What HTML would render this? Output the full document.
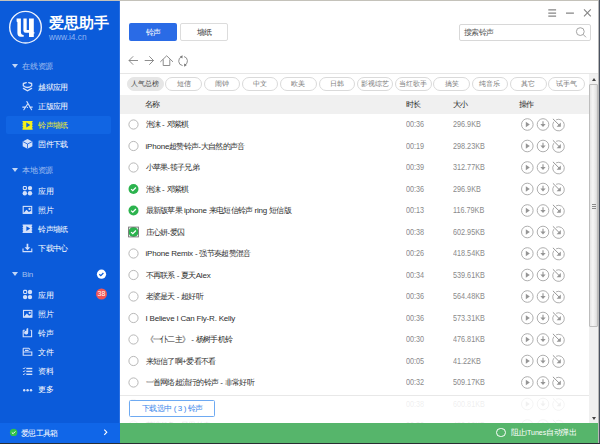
<!DOCTYPE html>
<html><head><meta charset="utf-8">
<style>
*{margin:0;padding:0;box-sizing:border-box}
html,body{width:600px;height:444px;overflow:hidden;background:#fff;font-family:"Liberation Sans",sans-serif;position:relative}
.a{position:absolute}
.t{white-space:nowrap;line-height:10px}
.sec{left:12px;font-size:8px;letter-spacing:-0.2px;color:rgba(255,255,255,.62)}
.sec i{display:inline-block;width:0;height:0;border-left:3px solid transparent;border-right:3px solid transparent;border-top:4px solid rgba(255,255,255,.75);margin-right:4px;vertical-align:1px}
.it{left:38.3px;font-size:8px;letter-spacing:-0.65px;color:#fff}

.nm{left:145.5px;font-size:8px;color:#2e2e2e}
.c{font-size:8px;letter-spacing:-0.72px}
.l{font-size:8px;letter-spacing:-0.2px}
.gr{font-size:8.2px;letter-spacing:0;color:#8a8a8a;transform:scaleX(0.885);transform-origin:0 50%}
.chip{top:77px;width:36.5px;height:14px;border:1px solid #dadada;border-radius:7px;font-size:6.6px;line-height:12px;text-align:center;color:#7a7a7a;background:#fff}
.chip.on{background:#e6e6e6;border-color:#e6e6e6;color:#444}
.hd{top:100.4px;font-size:8px;letter-spacing:-0.72px;color:#2a2a2a}
</style></head><body>
<div class="a" style="left:0;top:0;width:600px;height:1px;background:#c4c2ba"></div>
<div class="a" style="left:598px;top:0;width:1px;height:444px;background:#b8b8b8"></div>
<div class="a" style="left:599px;top:0;width:1px;height:444px;background:#4a5260"></div>
<div class="a" style="left:0;top:442.5px;width:600px;height:1.5px;background:#2a2e33"></div>

<div class="a" style="left:0;top:1px;width:120px;height:441.5px;background:#0b5bda"></div>
<div class="a" style="left:119px;top:1px;width:1px;height:422px;background:#2a6fe2"></div>
<div class="a" style="left:6px;top:116px;width:105px;height:18px;background:#1165e3;border-radius:2px"></div>
<div class="a" style="left:0;top:423px;width:120px;height:19.5px;background:#1066e8"></div>
<svg class="a" style="left:0;top:0" width="120" height="444" viewBox="0 0 120 444">
  <circle cx="25.5" cy="27.2" r="15.8" fill="#1461e0" stroke="#eef3fd" stroke-width="1.4"/>
  <path d="M16.6 18.6H20.9V32Q20.9 35 23.7 35.1V36.7H20.6Q17.4 36.7 17.4 33V22.3L16.6 21.6Z" fill="#fff"/>
  <path d="M23.4 18.6H26.7V29.9H29V18.6H33.8V32.3L35.1 32.9L33.8 33.6V37H29V32.8H25.6Q23.4 32.8 23.4 30.6Z" fill="#fff"/>
  <g fill="none" stroke="#d3e0fa" stroke-width="1.3" stroke-linecap="round">
    <path d="M23.4 83.5L26.3 82.7M28.7 82.7L31.6 83.5"/>
    <path d="M23.3 84.2V85.8Q27.5 89.2 31.7 85.8V84.2"/>
    <path d="M23.4 88.4L27.5 90.8L31.6 88.4"/>
  </g>
  <g fill="none" stroke="#d3e0fa" stroke-width="1">
    <path d="M26.9 101.6L31.6 109.7M27.4 104.4L23.8 109.7M22.7 107.1H25.3M29.7 107.1H32.3" stroke-width="1.1" stroke-linecap="round"/>
    <circle cx="27.4" cy="107.4" r="0.6" fill="#d3e0fa" stroke="none"/>
  </g>
  <path d="M22.5 120.9h10.1v1.3h-0.6v1.1h0.6v1.4h-0.6v1.1h0.6v1.4h-0.6v1.1h0.6v1.5H22.5v-1.5h0.6v-1.1h-0.6v-1.4h0.6v-1.1h-0.6v-1.4h0.6v-1.1h-0.6z" fill="#f4f01c"/>
  <path d="M26.3 122.6l4 2.4-4 2.4z" fill="#1165e3"/>
  <path d="M27.5 139l4.9 2.5v4.8l-4.9 2.5-4.8-2.5v-4.8z" fill="#d3e0fa"/>
  <path d="M22.9 141.6l4.6 2.4 4.7-2.4M27.5 144v4.6" fill="none" stroke="#0b5bda" stroke-width="0.8"/>
  <g fill="#d3e0fa">
    <circle cx="30" cy="188.1" r="2.2"/><circle cx="24.8" cy="193.2" r="2.2"/><circle cx="30" cy="193.2" r="2.2"/>
    <circle cx="30" cy="292" r="2.2"/><circle cx="25.1" cy="297.1" r="2.2"/><circle cx="30" cy="297.1" r="2.2"/>
    <circle cx="24.2" cy="390.2" r="1.2"/><circle cx="27.6" cy="390.2" r="1.2"/><circle cx="31" cy="390.2" r="1.2"/>
  </g>
  <g fill="none" stroke="#d3e0fa" stroke-width="1.1">
    <rect x="23.3" y="186.5" width="3.1" height="3.1" rx="0.8"/>
    <rect x="23.6" y="290.4" width="3.1" height="3.1" rx="0.8"/>
    <rect x="23.2" y="206.4" width="8.5" height="7" />
    <rect x="23.5" y="310.4" width="8.4" height="6.8" />
    <path d="M23.2 330.3v6.4h8.4v-6.4M24.8 330.3h-1.6M31.6 330.3h-1.2"/>
    <path d="M23.2 348.2h5.5l1.5 1.5v0M23.2 348.2v7h8.6v-3.2h-8.6M25 350.4h3.6"/>
    <path d="M23 248.6v3h8.8v-3"/>
  </g>
  <g fill="#d3e0fa">
    <path d="M23.2 213.4l3.3-3.6 2.3 2.2 2.9-1.4v2.8z"/><circle cx="29.5" cy="208.9" r="1.1"/>
    <path d="M23.5 317.2l3.3-3.6 2.3 2.2 2.8-1.4v2.8z"/><circle cx="29.7" cy="312.9" r="1.1"/>
    <path d="M26.6 243.8h1.7v3.5h2l-2.85 3-2.85-3h2z"/>
    <path d="M22.6 224.6h9.6v1.2h-0.5v1.1h0.5v1.3h-0.5v1.1h0.5v1.3h-0.5v1.1h0.5v1.3H22.6v-1.3h0.5v-1.1h-0.5v-1.3h0.5v-1.1h-0.5v-1.3h0.5v-1.1h-0.5z"/>
    <path d="M27.6 328.2v4.5a1.6 1.4 0 1 1-1.2-1.3v-2.4q0.9 0.2 1.6 1.4z" />
    <path d="M28.2 328v4.5a2 1.8 0 1 1-1.4-1.6v-2.9q1.3 0.4 1.4 0" />
  </g>
  <path d="M26.4 226.3l3.8 2.3-3.8 2.3z" fill="#0b5bda"/>
  <g fill="none" stroke="#d3e0fa" stroke-width="1">
    <path d="M23 368.2l0.8 0.8 1.4-1.6M23 371.1l0.8 0.8 1.4-1.6M23 374l0.8 0.8 1.4-1.6"/>
  </g>
  <g fill="#d3e0fa">
    <rect x="26.3" y="367.8" width="6" height="1.4"/><rect x="26.3" y="370.7" width="6" height="1.4"/><rect x="26.3" y="373.6" width="6" height="1.4"/>
  </g>
  <circle cx="101.5" cy="274.2" r="4.6" fill="#fff"/>
  <path d="M99.3 274.3l1.5 1.4 2.6-2.7" fill="none" stroke="#0b5bda" stroke-width="1.2"/>
  <circle cx="101.5" cy="294" r="5.5" fill="#f25555"/>
  <path d="M104.3 429.6l2.5 2.6-2.5 2.6" fill="none" stroke="#fff" stroke-width="1.1"/>
  <circle cx="13.6" cy="432.4" r="3.7" fill="#31c24a"/>
  <path d="M11.8 432.5l1.3 1.2 2.3-2.3" fill="none" stroke="#fff" stroke-width="1"/>
</svg>
<div class="a t" style="left:49px;top:15.3px;font-size:14.5px;line-height:16px;color:#fff;font-weight:bold">爱思助手</div>
<div class="a t" style="left:49px;top:32.5px;font-size:8.4px;line-height:8px;color:#8fb4f2">www.i4.cn</div>
<div class="a sec t" style="top:62.2px"><i></i>在线资源</div>
<div class="a it t" style="top:82.7px">越狱应用</div>
<div class="a it t" style="top:101.7px">正版应用</div>
<div class="a it t" style="top:120.7px;color:#f3ee1e">铃声墙纸</div>
<div class="a it t" style="top:140.2px">固件下载</div>
<div class="a sec t" style="top:166.2px"><i></i>本地资源</div>
<div class="a it t" style="top:186.7px">应用</div>
<div class="a it t" style="top:205.7px">照片</div>
<div class="a it t" style="top:224.6px">铃声墙纸</div>
<div class="a it t" style="top:243.6px">下载中心</div>
<div class="a sec t" style="top:270.2px"><i></i>Bin</div>
<div class="a it t" style="top:290.6px">应用</div>
<div class="a t" style="left:96px;top:289.2px;width:11px;color:#fff;font-size:7px;text-align:center">38</div>
<div class="a it t" style="top:309.7px">照片</div>
<div class="a it t" style="top:328.7px">铃声</div>
<div class="a it t" style="top:347.7px">文件</div>
<div class="a it t" style="top:366.6px">资料</div>
<div class="a it t" style="top:385.2px">更多</div>
<div class="a it t" style="left:21px;top:428.5px;font-size:8px">爱思工具箱</div>


<!-- main -->
<div class="a" style="left:129px;top:23px;width:48px;height:18px;background:#2a6be6;border-radius:2px;color:#fff;font-size:8px;letter-spacing:-0.5px;line-height:19.4px;text-align:center">铃声</div>
<div class="a" style="left:180px;top:23px;width:48px;height:18px;background:#fff;border:1px solid #dcdcdc;border-radius:2px;color:#333;font-size:8px;letter-spacing:-0.5px;line-height:17.4px;text-align:center">墙纸</div>
<div class="a" style="left:459px;top:23.5px;width:132px;height:17.2px;background:#fff;border:1px solid #d8d8d8;border-radius:2px"></div>
<div class="a t" style="left:464px;top:27.8px;font-size:8px;letter-spacing:-0.6px;color:#555">搜索铃声</div>
<div class="a" style="left:120px;top:73px;width:478px;height:1px;background:#e6e6e6"></div>
<div class="a chip on" style="left:127.0px">人气总榜</div>
<div class="a chip" style="left:165.3px">短信</div>
<div class="a chip" style="left:203.6px">闹钟</div>
<div class="a chip" style="left:241.9px">中文</div>
<div class="a chip" style="left:280.2px">欧美</div>
<div class="a chip" style="left:318.5px">日韩</div>
<div class="a chip" style="left:356.8px">影视综艺</div>
<div class="a chip" style="left:395.1px">当红歌手</div>
<div class="a chip" style="left:433.4px">搞笑</div>
<div class="a chip" style="left:471.7px">纯音乐</div>
<div class="a chip" style="left:510.0px">其它</div>
<div class="a chip" style="left:548.3px">试手气</div>
<div class="a" style="left:120px;top:95px;width:469px;height:18.5px;background:#f0f0f0"></div>
<div class="a t hd" style="left:145px">名称</div>
<div class="a t hd" style="left:405.5px">时长</div>
<div class="a t hd" style="left:453px">大小</div>
<div class="a t hd" style="left:519px">操作</div>

<div class="a t nm" style="top:120.0px"><span class="c">泡沫</span><span class="l"> - </span><span class="c">邓紫棋</span></div>
<div class="a t gr" style="left:405.5px;top:120.0px">00:36</div>
<div class="a t gr" style="left:453px;top:120.0px">296.9KB</div>
<div class="a t nm" style="top:141.5px"><span class="l">iPhone</span><span class="c">超赞铃声</span><span class="l">-</span><span class="c">大自然的声音</span></div>
<div class="a t gr" style="left:405.5px;top:141.5px">00:19</div>
<div class="a t gr" style="left:453px;top:141.5px">298.23KB</div>
<div class="a t nm" style="top:163.0px"><span class="c">小苹果</span><span class="l">-</span><span class="c">筷子兄弟</span></div>
<div class="a t gr" style="left:405.5px;top:163.0px">00:39</div>
<div class="a t gr" style="left:453px;top:163.0px">312.77KB</div>
<div class="a t nm" style="top:184.5px"><span class="c">泡沫</span><span class="l"> - </span><span class="c">邓紫棋</span></div>
<div class="a t gr" style="left:405.5px;top:184.5px">00:36</div>
<div class="a t gr" style="left:453px;top:184.5px">296.9KB</div>
<div class="a t nm" style="top:206.0px"><span class="c">最新版苹果</span><span class="l"> iphone </span><span class="c">来电短信铃声</span><span class="l"> ring </span><span class="c">短信版</span></div>
<div class="a t gr" style="left:405.5px;top:206.0px">00:13</div>
<div class="a t gr" style="left:453px;top:206.0px">116.79KB</div>
<div class="a t nm" style="top:227.5px"><span class="c">庄心妍</span><span class="l">-</span><span class="c">爱囚</span></div>
<div class="a t gr" style="left:405.5px;top:227.5px">00:38</div>
<div class="a t gr" style="left:453px;top:227.5px">602.95KB</div>
<div class="a t nm" style="top:249.0px"><span class="l">iPhone Remix - </span><span class="c">强节奏超赞混音</span></div>
<div class="a t gr" style="left:405.5px;top:249.0px">00:26</div>
<div class="a t gr" style="left:453px;top:249.0px">418.54KB</div>
<div class="a t nm" style="top:270.5px"><span class="c">不再联系</span><span class="l"> - </span><span class="c">夏天</span><span class="l">Alex</span></div>
<div class="a t gr" style="left:405.5px;top:270.5px">00:34</div>
<div class="a t gr" style="left:453px;top:270.5px">539.61KB</div>
<div class="a t nm" style="top:292.0px"><span class="c">老婆是天</span><span class="l"> - </span><span class="c">超好听</span></div>
<div class="a t gr" style="left:405.5px;top:292.0px">00:36</div>
<div class="a t gr" style="left:453px;top:292.0px">564.48KB</div>
<div class="a t nm" style="top:313.5px"><span class="l">I Believe I Can Fly-R. Kelly</span></div>
<div class="a t gr" style="left:405.5px;top:313.5px">00:36</div>
<div class="a t gr" style="left:453px;top:313.5px">573.31KB</div>
<div class="a t nm" style="top:335.0px"><span class="c">《一仆二主》</span><span class="l"> - </span><span class="c">杨树手机铃</span></div>
<div class="a t gr" style="left:405.5px;top:335.0px">00:30</div>
<div class="a t gr" style="left:453px;top:335.0px">476.81KB</div>
<div class="a t nm" style="top:356.5px"><span class="c">来短信了啊</span><span class="l">+</span><span class="c">爱看不看</span></div>
<div class="a t gr" style="left:405.5px;top:356.5px">00:05</div>
<div class="a t gr" style="left:453px;top:356.5px">41.22KB</div>
<div class="a t nm" style="top:378.0px"><span class="c">一首网络超流行的铃声</span><span class="l"> - </span><span class="c">非常好听</span></div>
<div class="a t gr" style="left:405.5px;top:378.0px">00:32</div>
<div class="a t gr" style="left:453px;top:378.0px">509.17KB</div>
<div class="a t nm" style="top:399.5px"><span class="c">最炫小苹果</span><span class="l"> - </span><span class="c">庄心妍</span></div>
<div class="a t gr" style="left:405.5px;top:399.5px">00:38</div>
<div class="a t gr" style="left:453px;top:399.5px">600.81KB</div>
<div class="a t nm" style="top:421.0px"><span class="c">荷塘月色</span><span class="l"> - </span><span class="c">凤凰传奇</span></div>
<div class="a t gr" style="left:405.5px;top:421.0px">00:30</div>
<div class="a t gr" style="left:453px;top:421.0px">480.12KB</div>

<svg class="a" style="left:0;top:0" width="600" height="444" viewBox="0 0 600 444">
  <g stroke="#858585" stroke-width="1.2" fill="none">
    <path d="M548.3 9.9h7.8M548.3 13.2h7.8M548.3 16.2h7.8M566 13.1h7.9"/>
    <path d="M584 9.3l6.8 7M590.8 9.3l-6.8 7" stroke-width="1.1"/>
  </g>
  <g stroke="#9a9a9a" stroke-width="0.9" fill="none">
    <circle cx="580.3" cy="31.6" r="3.9"/><path d="M583.1 34.4l2.9 2.9"/>
  </g>
  <g stroke="#7a7a7a" stroke-width="0.85" fill="none">
    <path d="M129 60.5h9M133.2 56.3L129 60.5l4.2 4.2"/>
    <path d="M144.7 60.5h8.8M149.3 56.3l4.2 4.2-4.2 4.2"/>
    <path d="M160.3 61.9l6.4-6.1 6.3 6.1M163.2 59.4v6.1h6.6v-6.1"/>
    <path d="M181.8 56.7A4.6 4.6 0 0 0 182.6 65.6M184 56.5A4.6 4.6 0 0 1 184.6 65.2"/>
  </g>
  <path d="M182.6 55.2l-0.2 3.4-2.6-1.8z" fill="#7a7a7a"/>
  <path d="M184.2 66.8l-0.1-3.4 2.8 1.6z" fill="#7a7a7a"/>
<circle cx="133.5" cy="124.5" r="4.6" fill="#fff" stroke="#b0b0b0" stroke-width="0.9"/>
<g transform="translate(520.5 117.5)"><circle cx="6.8" cy="7" r="5.8" fill="none" stroke="#a6a6a6" stroke-width="0.9"/><path d="M5.3 4.3v5.4l4-2.7z" fill="#959595"/><circle cx="22.5" cy="7" r="5.8" fill="none" stroke="#a6a6a6" stroke-width="0.9"/><path d="M22.5 3.8v4" stroke="#959595" stroke-width="1.1"/><path d="M19.9 6.6h5.2l-2.6 3z" fill="#959595"/><path d="M35.6 2.3A5.8 5.8 0 1 1 33.3 4.2" fill="none" stroke="#a6a6a6" stroke-width="0.9"/><path d="M32.4 1.3l6.4 6.4" stroke="#959595" stroke-width="1"/><path d="M40.3 5v4.2h-4.2z" fill="#959595"/></g>
<circle cx="133.5" cy="146.0" r="4.6" fill="#fff" stroke="#b0b0b0" stroke-width="0.9"/>
<g transform="translate(520.5 139.0)"><circle cx="6.8" cy="7" r="5.8" fill="none" stroke="#a6a6a6" stroke-width="0.9"/><path d="M5.3 4.3v5.4l4-2.7z" fill="#959595"/><circle cx="22.5" cy="7" r="5.8" fill="none" stroke="#a6a6a6" stroke-width="0.9"/><path d="M22.5 3.8v4" stroke="#959595" stroke-width="1.1"/><path d="M19.9 6.6h5.2l-2.6 3z" fill="#959595"/><path d="M35.6 2.3A5.8 5.8 0 1 1 33.3 4.2" fill="none" stroke="#a6a6a6" stroke-width="0.9"/><path d="M32.4 1.3l6.4 6.4" stroke="#959595" stroke-width="1"/><path d="M40.3 5v4.2h-4.2z" fill="#959595"/></g>
<circle cx="133.5" cy="167.5" r="4.6" fill="#fff" stroke="#b0b0b0" stroke-width="0.9"/>
<g transform="translate(520.5 160.5)"><circle cx="6.8" cy="7" r="5.8" fill="none" stroke="#a6a6a6" stroke-width="0.9"/><path d="M5.3 4.3v5.4l4-2.7z" fill="#959595"/><circle cx="22.5" cy="7" r="5.8" fill="none" stroke="#a6a6a6" stroke-width="0.9"/><path d="M22.5 3.8v4" stroke="#959595" stroke-width="1.1"/><path d="M19.9 6.6h5.2l-2.6 3z" fill="#959595"/><path d="M35.6 2.3A5.8 5.8 0 1 1 33.3 4.2" fill="none" stroke="#a6a6a6" stroke-width="0.9"/><path d="M32.4 1.3l6.4 6.4" stroke="#959595" stroke-width="1"/><path d="M40.3 5v4.2h-4.2z" fill="#959595"/></g>
<circle cx="133.5" cy="189.0" r="5" fill="#2cb34e"/><path d="M131.1 189.1l1.7 1.6 3.1-3.2" fill="none" stroke="#fff" stroke-width="1.3"/>
<g transform="translate(520.5 182.0)"><circle cx="6.8" cy="7" r="5.8" fill="none" stroke="#a6a6a6" stroke-width="0.9"/><path d="M5.3 4.3v5.4l4-2.7z" fill="#959595"/><circle cx="22.5" cy="7" r="5.8" fill="none" stroke="#a6a6a6" stroke-width="0.9"/><path d="M22.5 3.8v4" stroke="#959595" stroke-width="1.1"/><path d="M19.9 6.6h5.2l-2.6 3z" fill="#959595"/><path d="M35.6 2.3A5.8 5.8 0 1 1 33.3 4.2" fill="none" stroke="#a6a6a6" stroke-width="0.9"/><path d="M32.4 1.3l6.4 6.4" stroke="#959595" stroke-width="1"/><path d="M40.3 5v4.2h-4.2z" fill="#959595"/></g>
<circle cx="133.5" cy="210.5" r="5" fill="#2cb34e"/><path d="M131.1 210.6l1.7 1.6 3.1-3.2" fill="none" stroke="#fff" stroke-width="1.3"/>
<g transform="translate(520.5 203.5)"><circle cx="6.8" cy="7" r="5.8" fill="none" stroke="#a6a6a6" stroke-width="0.9"/><path d="M5.3 4.3v5.4l4-2.7z" fill="#959595"/><circle cx="22.5" cy="7" r="5.8" fill="none" stroke="#a6a6a6" stroke-width="0.9"/><path d="M22.5 3.8v4" stroke="#959595" stroke-width="1.1"/><path d="M19.9 6.6h5.2l-2.6 3z" fill="#959595"/><path d="M35.6 2.3A5.8 5.8 0 1 1 33.3 4.2" fill="none" stroke="#a6a6a6" stroke-width="0.9"/><path d="M32.4 1.3l6.4 6.4" stroke="#959595" stroke-width="1"/><path d="M40.3 5v4.2h-4.2z" fill="#959595"/></g>
<circle cx="133.5" cy="232.0" r="5" fill="#2cb34e"/><path d="M131.1 232.1l1.7 1.6 3.1-3.2" fill="none" stroke="#fff" stroke-width="1.3"/>
<rect x="128.6" y="227.1" width="9.8" height="9.8" fill="none" stroke="#707070" stroke-width="0.9"/>
<g transform="translate(520.5 225.0)"><circle cx="6.8" cy="7" r="5.8" fill="none" stroke="#a6a6a6" stroke-width="0.9"/><path d="M5.3 4.3v5.4l4-2.7z" fill="#959595"/><circle cx="22.5" cy="7" r="5.8" fill="none" stroke="#a6a6a6" stroke-width="0.9"/><path d="M22.5 3.8v4" stroke="#959595" stroke-width="1.1"/><path d="M19.9 6.6h5.2l-2.6 3z" fill="#959595"/><path d="M35.6 2.3A5.8 5.8 0 1 1 33.3 4.2" fill="none" stroke="#a6a6a6" stroke-width="0.9"/><path d="M32.4 1.3l6.4 6.4" stroke="#959595" stroke-width="1"/><path d="M40.3 5v4.2h-4.2z" fill="#959595"/></g>
<circle cx="133.5" cy="253.5" r="4.6" fill="#fff" stroke="#b0b0b0" stroke-width="0.9"/>
<g transform="translate(520.5 246.5)"><circle cx="6.8" cy="7" r="5.8" fill="none" stroke="#a6a6a6" stroke-width="0.9"/><path d="M5.3 4.3v5.4l4-2.7z" fill="#959595"/><circle cx="22.5" cy="7" r="5.8" fill="none" stroke="#a6a6a6" stroke-width="0.9"/><path d="M22.5 3.8v4" stroke="#959595" stroke-width="1.1"/><path d="M19.9 6.6h5.2l-2.6 3z" fill="#959595"/><path d="M35.6 2.3A5.8 5.8 0 1 1 33.3 4.2" fill="none" stroke="#a6a6a6" stroke-width="0.9"/><path d="M32.4 1.3l6.4 6.4" stroke="#959595" stroke-width="1"/><path d="M40.3 5v4.2h-4.2z" fill="#959595"/></g>
<circle cx="133.5" cy="275.0" r="4.6" fill="#fff" stroke="#b0b0b0" stroke-width="0.9"/>
<g transform="translate(520.5 268.0)"><circle cx="6.8" cy="7" r="5.8" fill="none" stroke="#a6a6a6" stroke-width="0.9"/><path d="M5.3 4.3v5.4l4-2.7z" fill="#959595"/><circle cx="22.5" cy="7" r="5.8" fill="none" stroke="#a6a6a6" stroke-width="0.9"/><path d="M22.5 3.8v4" stroke="#959595" stroke-width="1.1"/><path d="M19.9 6.6h5.2l-2.6 3z" fill="#959595"/><path d="M35.6 2.3A5.8 5.8 0 1 1 33.3 4.2" fill="none" stroke="#a6a6a6" stroke-width="0.9"/><path d="M32.4 1.3l6.4 6.4" stroke="#959595" stroke-width="1"/><path d="M40.3 5v4.2h-4.2z" fill="#959595"/></g>
<circle cx="133.5" cy="296.5" r="4.6" fill="#fff" stroke="#b0b0b0" stroke-width="0.9"/>
<g transform="translate(520.5 289.5)"><circle cx="6.8" cy="7" r="5.8" fill="none" stroke="#a6a6a6" stroke-width="0.9"/><path d="M5.3 4.3v5.4l4-2.7z" fill="#959595"/><circle cx="22.5" cy="7" r="5.8" fill="none" stroke="#a6a6a6" stroke-width="0.9"/><path d="M22.5 3.8v4" stroke="#959595" stroke-width="1.1"/><path d="M19.9 6.6h5.2l-2.6 3z" fill="#959595"/><path d="M35.6 2.3A5.8 5.8 0 1 1 33.3 4.2" fill="none" stroke="#a6a6a6" stroke-width="0.9"/><path d="M32.4 1.3l6.4 6.4" stroke="#959595" stroke-width="1"/><path d="M40.3 5v4.2h-4.2z" fill="#959595"/></g>
<circle cx="133.5" cy="318.0" r="4.6" fill="#fff" stroke="#b0b0b0" stroke-width="0.9"/>
<g transform="translate(520.5 311.0)"><circle cx="6.8" cy="7" r="5.8" fill="none" stroke="#a6a6a6" stroke-width="0.9"/><path d="M5.3 4.3v5.4l4-2.7z" fill="#959595"/><circle cx="22.5" cy="7" r="5.8" fill="none" stroke="#a6a6a6" stroke-width="0.9"/><path d="M22.5 3.8v4" stroke="#959595" stroke-width="1.1"/><path d="M19.9 6.6h5.2l-2.6 3z" fill="#959595"/><path d="M35.6 2.3A5.8 5.8 0 1 1 33.3 4.2" fill="none" stroke="#a6a6a6" stroke-width="0.9"/><path d="M32.4 1.3l6.4 6.4" stroke="#959595" stroke-width="1"/><path d="M40.3 5v4.2h-4.2z" fill="#959595"/></g>
<circle cx="133.5" cy="339.5" r="4.6" fill="#fff" stroke="#b0b0b0" stroke-width="0.9"/>
<g transform="translate(520.5 332.5)"><circle cx="6.8" cy="7" r="5.8" fill="none" stroke="#a6a6a6" stroke-width="0.9"/><path d="M5.3 4.3v5.4l4-2.7z" fill="#959595"/><circle cx="22.5" cy="7" r="5.8" fill="none" stroke="#a6a6a6" stroke-width="0.9"/><path d="M22.5 3.8v4" stroke="#959595" stroke-width="1.1"/><path d="M19.9 6.6h5.2l-2.6 3z" fill="#959595"/><path d="M35.6 2.3A5.8 5.8 0 1 1 33.3 4.2" fill="none" stroke="#a6a6a6" stroke-width="0.9"/><path d="M32.4 1.3l6.4 6.4" stroke="#959595" stroke-width="1"/><path d="M40.3 5v4.2h-4.2z" fill="#959595"/></g>
<circle cx="133.5" cy="361.0" r="4.6" fill="#fff" stroke="#b0b0b0" stroke-width="0.9"/>
<g transform="translate(520.5 354.0)"><circle cx="6.8" cy="7" r="5.8" fill="none" stroke="#a6a6a6" stroke-width="0.9"/><path d="M5.3 4.3v5.4l4-2.7z" fill="#959595"/><circle cx="22.5" cy="7" r="5.8" fill="none" stroke="#a6a6a6" stroke-width="0.9"/><path d="M22.5 3.8v4" stroke="#959595" stroke-width="1.1"/><path d="M19.9 6.6h5.2l-2.6 3z" fill="#959595"/><path d="M35.6 2.3A5.8 5.8 0 1 1 33.3 4.2" fill="none" stroke="#a6a6a6" stroke-width="0.9"/><path d="M32.4 1.3l6.4 6.4" stroke="#959595" stroke-width="1"/><path d="M40.3 5v4.2h-4.2z" fill="#959595"/></g>
<circle cx="133.5" cy="382.5" r="4.6" fill="#fff" stroke="#b0b0b0" stroke-width="0.9"/>
<g transform="translate(520.5 375.5)"><circle cx="6.8" cy="7" r="5.8" fill="none" stroke="#a6a6a6" stroke-width="0.9"/><path d="M5.3 4.3v5.4l4-2.7z" fill="#959595"/><circle cx="22.5" cy="7" r="5.8" fill="none" stroke="#a6a6a6" stroke-width="0.9"/><path d="M22.5 3.8v4" stroke="#959595" stroke-width="1.1"/><path d="M19.9 6.6h5.2l-2.6 3z" fill="#959595"/><path d="M35.6 2.3A5.8 5.8 0 1 1 33.3 4.2" fill="none" stroke="#a6a6a6" stroke-width="0.9"/><path d="M32.4 1.3l6.4 6.4" stroke="#959595" stroke-width="1"/><path d="M40.3 5v4.2h-4.2z" fill="#959595"/></g>
<circle cx="133.5" cy="404.0" r="4.6" fill="#fff" stroke="#b0b0b0" stroke-width="0.9"/>
<g transform="translate(520.5 397.0)"><circle cx="6.8" cy="7" r="5.8" fill="none" stroke="#a6a6a6" stroke-width="0.9"/><path d="M5.3 4.3v5.4l4-2.7z" fill="#959595"/><circle cx="22.5" cy="7" r="5.8" fill="none" stroke="#a6a6a6" stroke-width="0.9"/><path d="M22.5 3.8v4" stroke="#959595" stroke-width="1.1"/><path d="M19.9 6.6h5.2l-2.6 3z" fill="#959595"/><path d="M35.6 2.3A5.8 5.8 0 1 1 33.3 4.2" fill="none" stroke="#a6a6a6" stroke-width="0.9"/><path d="M32.4 1.3l6.4 6.4" stroke="#959595" stroke-width="1"/><path d="M40.3 5v4.2h-4.2z" fill="#959595"/></g>
<circle cx="133.5" cy="425.5" r="4.6" fill="#fff" stroke="#b0b0b0" stroke-width="0.9"/>
<g transform="translate(520.5 418.5)"><circle cx="6.8" cy="7" r="5.8" fill="none" stroke="#a6a6a6" stroke-width="0.9"/><path d="M5.3 4.3v5.4l4-2.7z" fill="#959595"/><circle cx="22.5" cy="7" r="5.8" fill="none" stroke="#a6a6a6" stroke-width="0.9"/><path d="M22.5 3.8v4" stroke="#959595" stroke-width="1.1"/><path d="M19.9 6.6h5.2l-2.6 3z" fill="#959595"/><path d="M35.6 2.3A5.8 5.8 0 1 1 33.3 4.2" fill="none" stroke="#a6a6a6" stroke-width="0.9"/><path d="M32.4 1.3l6.4 6.4" stroke="#959595" stroke-width="1"/><path d="M40.3 5v4.2h-4.2z" fill="#959595"/></g>
</svg>

<!-- footer overlay -->
<div class="a" style="left:120px;top:395px;width:469px;height:28px;background:rgba(255,255,255,.86);border-top:1px solid #e8e8e8"></div>
<div class="a" style="left:129.3px;top:400px;width:86px;height:17.2px;border:1px solid #6eaaf2;border-radius:1.5px;background:#fff;color:#3a86ea;font-size:8px;letter-spacing:-0.4px;line-height:16.6px;text-align:center;white-space:nowrap">下载选中 ( 3 ) 铃声</div>

<!-- scrollbar -->
<div class="a" style="left:589px;top:74px;width:9px;height:349px;background:#f0f0f0"></div>
<div class="a" style="left:591.5px;top:77.5px;width:0;height:0;border-left:2.5px solid transparent;border-right:2.5px solid transparent;border-bottom:3px solid #444"></div>
<div class="a" style="left:589px;top:84px;width:9px;height:243px;background:linear-gradient(90deg,#e4e4e4,#f5f5f5 40%,#e6e6e6 80%,#d8d8d8);border:1px solid #bdbdbd;border-radius:1px"></div>
<div class="a" style="left:591.5px;top:203.5px;width:4px;height:5px;background:repeating-linear-gradient(180deg,#8a8a8a 0,#8a8a8a 1px,transparent 1px,transparent 2px)"></div>
<div class="a" style="left:591.5px;top:416.5px;width:0;height:0;border-left:2.5px solid transparent;border-right:2.5px solid transparent;border-top:3px solid #444"></div>

<!-- green bar -->
<div class="a" style="left:120px;top:423px;width:478px;height:19.5px;background:#56b56b"></div>
<div class="a" style="left:496px;top:427.5px;width:9.5px;height:9.5px;border-radius:50%;border:1px solid #fff"></div>
<div class="a t" style="left:510.5px;top:428px;font-size:8px;color:#fff"><span style="letter-spacing:-0.6px">阻止</span><span style="font-size:7px;letter-spacing:0.05px">iTunes</span><span style="letter-spacing:-0.6px">自动弹出</span></div>
</body></html>
